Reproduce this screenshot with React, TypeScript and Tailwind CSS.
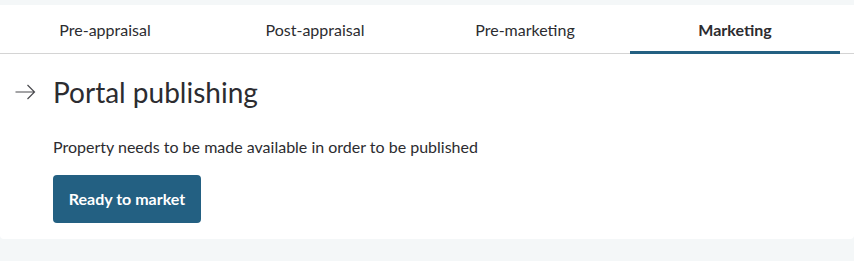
const tabs = ["Pre-appraisal", "Post-appraisal", "Pre-marketing", "Marketing"]

function Arrow() {
  return (
    <svg width="21" height="16" viewBox="0 0 21 16" fill="none" className="text-[#4a4a4e]">
      <path d="M0.5 8H19.5M12.5 1L19.5 8L12.5 15" stroke="currentColor" strokeWidth="1.2" />
    </svg>
  )
}

export default function App() {
  const active = "Marketing"

  return (
    <div className="min-h-[261px] bg-[#f4f7f8] pt-[5px] font-['Lato',sans-serif] text-[#2c2c30]">
      <div className="h-[234px] rounded-b-[4px] bg-white">
        <div className="flex h-[49px] border-b border-[#d4d4d4]">
          {tabs.map((tab) => (
            <div
              key={tab}
              className={
                tab === active
                  ? "-mb-px flex w-[210px] items-center justify-center border-b-[3px] border-[#236082] pt-[3px] text-[16px] font-bold"
                  : "flex w-[210px] items-center justify-center pt-[1px] text-[16px]"
              }
            >
              {tab}
            </div>
          ))}
        </div>

        <div className="flex items-center pt-[20px]">
          <div className="flex w-[53px] pl-[15px]">
            <Arrow />
          </div>
          <h1 className="text-[28px] leading-[36px]">Portal publishing</h1>
        </div>

        <p className="mt-[25px] pl-[53px] text-[16px] leading-[24px]">
          Property needs to be made available in order to be published
        </p>

        <div className="mt-[16px] pl-[53px]">
          <button className="h-[48px] w-[148px] rounded-[4px] bg-[#236082] text-[16px] font-bold text-white">
            Ready to market
          </button>
        </div>
      </div>
    </div>
  )
}
